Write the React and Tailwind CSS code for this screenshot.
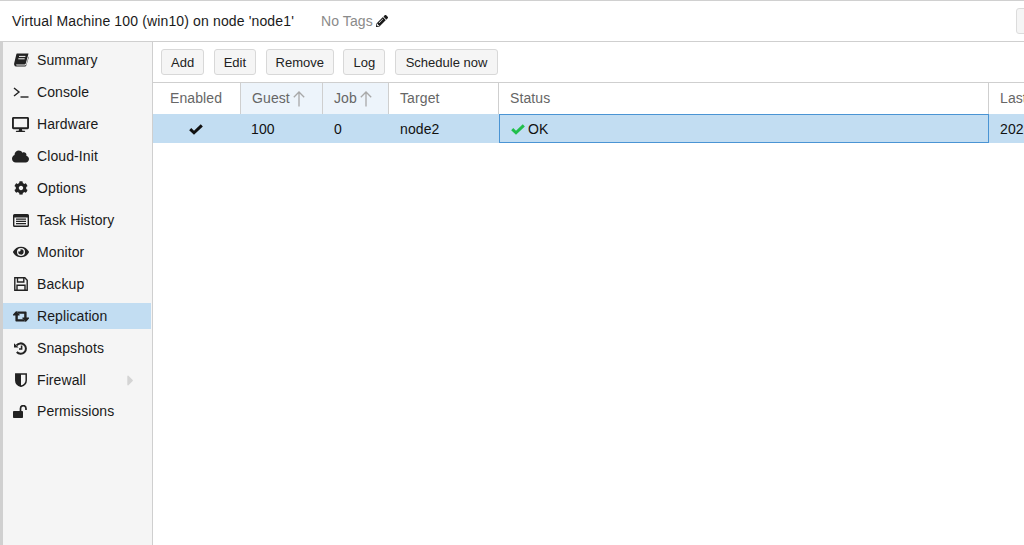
import React from 'react';
import { FaDesktop, FaCloud, FaCog, FaEye, FaPencilAlt, FaCaretRight } from 'react-icons/fa';

const BookIcon = () => (
    <svg width="16" height="14" viewBox="0 0 16 14" fill="#222">
        <path d="M4 .5H15.5L12.8 10.4Q12.5 11.4 11.5 11.4H3.6Q2.8 11.4 3 12Q3.2 12.4 4 12.4H12.2Q13 12.4 13.3 11.6L15.6 3.5L15.9 4L13.3 12.6Q13 13.6 12 13.6H3.4Q1.5 13.6 1.1 11.4Q1 10.8 1.3 9.8L3.3 1.6Q3.5 .5 4 .5Z" />
        <path d="M6 3.4H12.4M5.3 5.8H11.7" stroke="#f5f5f5" strokeWidth="1" />
    </svg>
);

const TerminalIcon = () => (
    <svg width="16" height="14" viewBox="0 0 16 14" fill="none" stroke="#222" strokeWidth="1.4">
        <path d="M1 3L6 7L1 11" />
        <path d="M7.5 12H15.5" />
    </svg>
);

const ListIcon = () => (
    <svg width="16" height="13" viewBox="0 0 16 13">
        <path d="M1.5 0H14.5Q16 0 16 1.5V11.5Q16 13 14.5 13H1.5Q0 13 0 11.5V1.5Q0 0 1.5 0ZM1.4 3.4V11.2Q1.4 11.6 1.8 11.6H14.2Q14.6 11.6 14.6 11.2V3.4Z" fill="#222" />
        <path d="M3 5.2H13M3 7.4H13M3 9.6H13" stroke="#222" strokeWidth="1.3" />
    </svg>
);

const SaveIcon = () => (
    <svg width="14" height="14" viewBox="0 0 14 14" fill="none" stroke="#222" strokeWidth="1.4">
        <path d="M.8.8H10.8L13.2 3.2V13.2H.8Z" />
        <path d="M3.5 1V5H9.8V1" />
        <path d="M3 13V8.2H11V13" />
    </svg>
);

const RetweetIcon = () => (
    <svg width="16" height="11" viewBox="0 0 16 11" fill="#222">
        <path d="M3.2 0L6.6 3.6V4.6H4.8V8.2H10.4L12.2 10.6H3.2Q2.4 10.6 2.4 9.8V4.6H0V3.6Z" />
        <path d="M12.8 11L9.4 7.4V6.4H11.2V2.8H5.6L3.8 .4H12.8Q13.6 .4 13.6 1.2V6.4H16V7.4Z" />
    </svg>
);

const HistoryIcon = () => (
    <svg width="14" height="13" viewBox="0 0 14 13" fill="none" stroke="#222" strokeWidth="2">
        <path d="M2.6 3.4A5.2 5.2 0 1 1 2.8 10" />
        <path d="M0 1.2L4.6 5.6H0Z" fill="#222" stroke="none" />
        <path d="M7.6 3.6V7H5" strokeWidth="1.6" />
    </svg>
);

const ShieldIcon = () => (
    <svg width="12" height="14" viewBox="0 0 12 14">
        <path d="M.8 1H11.2V7.4C11.2 10.4 8.4 12.4 6 13.3C3.6 12.4 .8 10.4 .8 7.4Z" fill="#f5f5f5" stroke="#222" strokeWidth="1.5" />
        <path d="M.8 1H6V13.3C3.6 12.4 .8 10.4 .8 7.4Z" fill="#222" />
    </svg>
);

const UnlockIcon = () => (
    <svg width="15" height="13" viewBox="0 0 15 13">
        <rect x="0" y="6" width="10" height="7" rx=".8" fill="#222" />
        <path d="M7.5 6.5V3.4A2.7 2.7 0 0 1 13 3.4V5" fill="none" stroke="#222" strokeWidth="1.7" />
    </svg>
);

const CheckIcon = ({ color }) => (
    <svg width="14" height="11" viewBox="0 0 14 11" fill="none" stroke={color} strokeWidth="3">
        <path d="M1.2 5.2L5 8.8L12.8 1.4" />
    </svg>
);

const SortArrow = () => (
    <svg width="12" height="16" viewBox="0 0 12 16" fill="none" stroke="#a8a8a8" strokeWidth="1.3" className="ml-[3px]">
        <path d="M6 1V15.5M.8 6.2L6 1L11.2 6.2" />
    </svg>
);

const menu = [
    { label: 'Summary', icon: <BookIcon /> },
    { label: 'Console', icon: <TerminalIcon /> },
    { label: 'Hardware', icon: <FaDesktop size={17} /> },
    { label: 'Cloud-Init', icon: <FaCloud size={17} /> },
    { label: 'Options', icon: <FaCog size={14} /> },
    { label: 'Task History', icon: <ListIcon /> },
    { label: 'Monitor', icon: <FaEye size={16} /> },
    { label: 'Backup', icon: <SaveIcon /> },
    { label: 'Replication', icon: <RetweetIcon />, active: true },
    { label: 'Snapshots', icon: <HistoryIcon /> },
    { label: 'Firewall', icon: <ShieldIcon />, arrow: true },
    { label: 'Permissions', icon: <UnlockIcon /> },
];

const buttons = ['Add', 'Edit', 'Remove', 'Log', 'Schedule now'];

const App = () => {
    return (
        <div className="w-[1024px] h-[545px] overflow-hidden bg-white flex flex-col text-[14px] tracking-[0.1px] text-[#1a1a1a] border-t border-[#d0d0d0] font-['Liberation_Sans',Arial,sans-serif]">
            <div className="h-[41px] shrink-0 flex items-center justify-between border-b border-[#cfcfcf] pl-[12px] -mr-[20px]">
                <div className="flex items-center">
                    <span className="tracking-[0.14px]">Virtual Machine 100 (win10) on node 'node1'</span>
                    <span className="ml-[27px] text-[#8a8a8a]">No Tags</span>
                    <FaPencilAlt size={12} className="ml-[3px] text-[#1a1a1a]" />
                </div>
                <div className="w-[28px] h-[26px] border border-[#dcdcdc] rounded-[3px] bg-[#f5f5f5]" />
            </div>
            <div className="flex flex-1 min-h-0">
                <div className="w-[153px] shrink-0 border-l-[3px] border-l-[#d0d0d0] border-r border-r-[#cfcfcf] bg-[#f5f5f5] pt-[5px]">
                    {menu.map((item) => (
                        <div key={item.label} className={`h-[26px] mr-px flex items-center relative ${item.label === 'Firewall' ? 'mb-[5px]' : 'mb-[6px]'} ${item.active ? 'bg-[#c2ddf2]' : ''}`}>
                            <span className="w-[34px] shrink-0 flex justify-center pl-[1px] text-[#222]">{item.icon}</span>
                            <span>{item.label}</span>
                            {item.arrow && <FaCaretRight size={17} className="absolute right-[12px] text-[#d4d4d4]" />}
                        </div>
                    ))}
                </div>
                <div className="flex-1 min-w-0 flex flex-col">
                    <div className="h-[41px] shrink-0 flex items-center gap-[9.5px] px-[8px] border-b border-[#cfcfcf]">
                        {buttons.map((b) => (
                            <button key={b} className={`h-[26px] text-[13px] tracking-normal leading-none text-[#222] bg-[#f5f5f5] border border-[#d8d8d8] rounded-[3px] whitespace-nowrap ${b === 'Schedule now' ? 'px-[10px]' : 'px-[9px]'}`}>{b}</button>
                        ))}
                    </div>
                    <div className="flex h-[31px] shrink-0 text-[#666] w-[900px] bg-white">
                        <div className="w-[88px] shrink-0 border-r border-[#cfcfcf] flex items-center pl-[17px]">Enabled</div>
                        <div className="w-[82px] shrink-0 border-r border-[#cfcfcf] bg-[#edf4fb] flex items-center pl-[11px]">Guest<SortArrow /></div>
                        <div className="w-[66px] shrink-0 border-r border-[#cfcfcf] bg-[#edf4fb] flex items-center pl-[11px]">Job<SortArrow /></div>
                        <div className="w-[110px] shrink-0 border-r border-[#cfcfcf] flex items-center pl-[11px]">Target</div>
                        <div className="w-[490px] shrink-0 border-r border-[#cfcfcf] flex items-center pl-[11px]">Status</div>
                        <div className="flex-1 flex items-center pl-[11px]">Last</div>
                    </div>
                    <div className="flex h-[29px] shrink-0 w-[900px] bg-[#c2ddf2] text-[#111]">
                        <div className="w-[88px] shrink-0 flex items-center justify-center pr-[2px] pt-px"><CheckIcon color="#111" /></div>
                        <div className="w-[82px] shrink-0 flex items-center pl-[10px] pt-px">100</div>
                        <div className="w-[66px] shrink-0 flex items-center pl-[11px] pt-px">0</div>
                        <div className="w-[110px] shrink-0 flex items-center pl-[11px] pt-px">node2</div>
                        <div className="w-[490px] shrink-0 flex items-center pl-[11px] pt-px border border-[#4a94d4]">
                            <CheckIcon color="#21bf4b" /><span className="ml-[3px]">OK</span>
                        </div>
                        <div className="flex-1 flex items-center pl-[11px] pt-px">2023</div>
                    </div>
                </div>
            </div>
        </div>
    );
};

export default App;
